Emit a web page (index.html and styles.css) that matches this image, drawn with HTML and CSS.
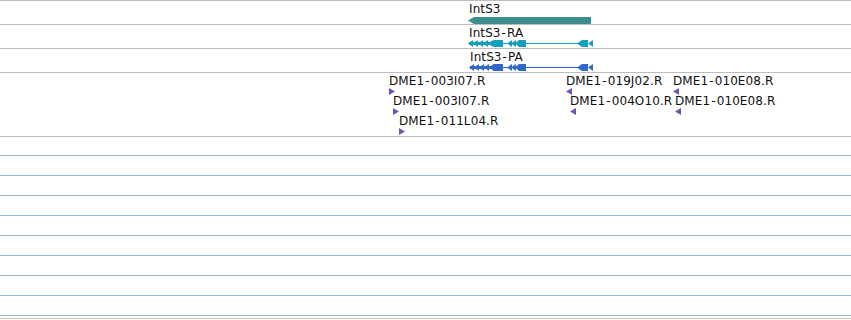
FILE: index.html
```html
<!DOCTYPE html>
<html>
<head>
<meta charset="utf-8">
<link rel="stylesheet" href="styles.css">
</head>
<body>
<div class="browser">
  <div class="track gene-track">
    <span class="label" style="left:469px;top:2px">IntS3</span>
    <svg class="glyph" style="left:466px;top:15px" width="130" height="9" viewBox="0 0 130 9">
      <polygon points="2,4.5 8,1 125,1 125,8 8,8" fill="#3a8f8e"/>
    </svg>
  </div>
  <div class="track tx-track">
    <span class="label" style="left:469px;top:26px">IntS3<span class="dash">-</span>RA</span>
    <svg class="glyph" style="left:466px;top:38px" width="132" height="9" viewBox="0 0 132 9">
      <g fill="#149fc0" stroke="none">
        <line x1="60" y1="4.5" x2="113" y2="4.5" stroke="#149fc0" stroke-width="1"/>
        <polygon points="2,4.5 7,1 7,8"/>
        <polygon points="7,4.5 12,1 12,8"/>
        <polygon points="12,4.5 17,1 17,8"/>
        <polygon points="17,4.5 22,1 22,8"/>
        <polygon points="22,4.5 27,1 27,8"/>
        <rect x="3" y="3" width="24" height="3"/>
        <polygon points="24,4.5 28,1 37,1 37,8 28,8"/>
        <rect x="37" y="4" width="5" height="1"/>
        <polygon points="41,4.5 46,1 46,8"/>
        <polygon points="45,4.5 50,1 50,8"/>
        <polygon points="49,4.5 53,1 60,1 60,8 53,8"/>
        <polygon points="111,4.5 116,1 122,1 122,8 116,8"/>
        <polygon points="122,4.5 127,1 127,8"/>
      </g>
    </svg>
  </div>
  <div class="track tx-track">
    <span class="label" style="left:470px;top:50px">IntS3<span class="dash">-</span>PA</span>
    <svg class="glyph" style="left:466px;top:62px" width="132" height="9" viewBox="0 0 132 9">
      <g fill="#3168c9" stroke="none">
        <line x1="60" y1="4.5" x2="113" y2="4.5" stroke="#3168c9" stroke-width="1"/>
        <polygon points="3,4.5 8,1 8,8"/>
        <polygon points="8,4.5 13,1 13,8"/>
        <polygon points="13,4.5 18,1 18,8"/>
        <polygon points="18,4.5 23,1 23,8"/>
        <polygon points="23,4.5 28,1 28,8"/>
        <rect x="4" y="3" width="24" height="3"/>
        <polygon points="24,4.5 28,1 37,1 37,8 28,8"/>
        <rect x="37" y="4" width="5" height="1"/>
        <polygon points="41,4.5 46,1 46,8"/>
        <polygon points="45,4.5 50,1 50,8"/>
        <polygon points="49,4.5 53,1 60,1 60,8 53,8"/>
        <polygon points="111,4.5 116,1 122,1 122,8 116,8"/>
        <polygon points="122,4.5 127,1 127,8"/>
      </g>
    </svg>
  </div>
  <div class="track feature-track">
    <span class="label" style="left:389px;top:74px">DME1<span class="dash">-</span>003I07.R</span>
    <svg class="mark" style="left:389px;top:87px" width="6" height="7"><polygon points="0,0 6,3.5 0,7" fill="#7452b0"/></svg>
    <span class="label" style="left:393px;top:94px">DME1<span class="dash">-</span>003I07.R</span>
    <svg class="mark" style="left:393px;top:107px" width="6" height="7"><polygon points="0,0 6,3.5 0,7" fill="#7452b0"/></svg>
    <span class="label" style="left:399px;top:114px">DME1<span class="dash">-</span>011L04.R</span>
    <svg class="mark" style="left:399px;top:127px" width="6" height="7"><polygon points="0,0 6,3.5 0,7" fill="#7452b0"/></svg>

    <span class="label" style="left:566px;top:74px">DME1<span class="dash">-</span>019J02.R</span>
    <svg class="mark" style="left:566px;top:87px" width="6" height="7"><polygon points="6,0 0,3.5 6,7" fill="#7452b0"/></svg>
    <span class="label" style="left:570px;top:94px">DME1<span class="dash">-</span>004O10.R</span>
    <svg class="mark" style="left:570px;top:107px" width="6" height="7"><polygon points="6,0 0,3.5 6,7" fill="#7452b0"/></svg>

    <span class="label" style="left:673px;top:74px">DME1<span class="dash">-</span>010E08.R</span>
    <svg class="mark" style="left:673px;top:87px" width="6" height="7"><polygon points="6,0 0,3.5 6,7" fill="#7452b0"/></svg>
    <span class="label" style="left:675px;top:94px">DME1<span class="dash">-</span>010E08.R</span>
    <svg class="mark" style="left:675px;top:107px" width="6" height="7"><polygon points="6,0 0,3.5 6,7" fill="#7452b0"/></svg>
  </div>
  <div class="gap"></div>
  <div class="blue-rows">
    <div class="brow"></div><div class="brow"></div><div class="brow"></div>
    <div class="brow"></div><div class="brow"></div><div class="brow"></div>
    <div class="brow"></div><div class="brow"></div>
  </div>
</div>
</body>
</html>
```
FILE: styles.css
```css
html, body {
  margin: 0;
  padding: 0;
  background: #fff;
}
.browser {
  position: relative;
  width: 851px;
  height: 320px;
  overflow: hidden;
  border-top: 1px solid #bdbdbd;
  box-sizing: border-box;
  display: flex;
  flex-direction: column;
  font-family: "DejaVu Sans", Verdana, sans-serif;
  font-size: 12px;
  color: #111;
}
.track {
  height: 23px;
  border-bottom: 1px solid #bdbdbd;
  flex: none;
}
.feature-track {
  height: 63px;
}
.gap {
  height: 18px;
  border-bottom: 1px solid #8fbbdb;
  flex: none;
}
.blue-rows {
  display: flex;
  flex-direction: column;
  flex: none;
}
.brow {
  height: 19px;
  border-bottom: 1px solid #8fbbdb;
}
.blue-rows::after {
  content: "";
  display: block;
  height: 2px;
  border-bottom: 1px solid #c8c0b8;
}
.label {
  position: absolute;
  line-height: 13px;
  white-space: nowrap;
  letter-spacing: 0.1px;
}
.dash {
  padding: 0 1px;
}
.glyph, .mark {
  position: absolute;
  display: block;
}
```
